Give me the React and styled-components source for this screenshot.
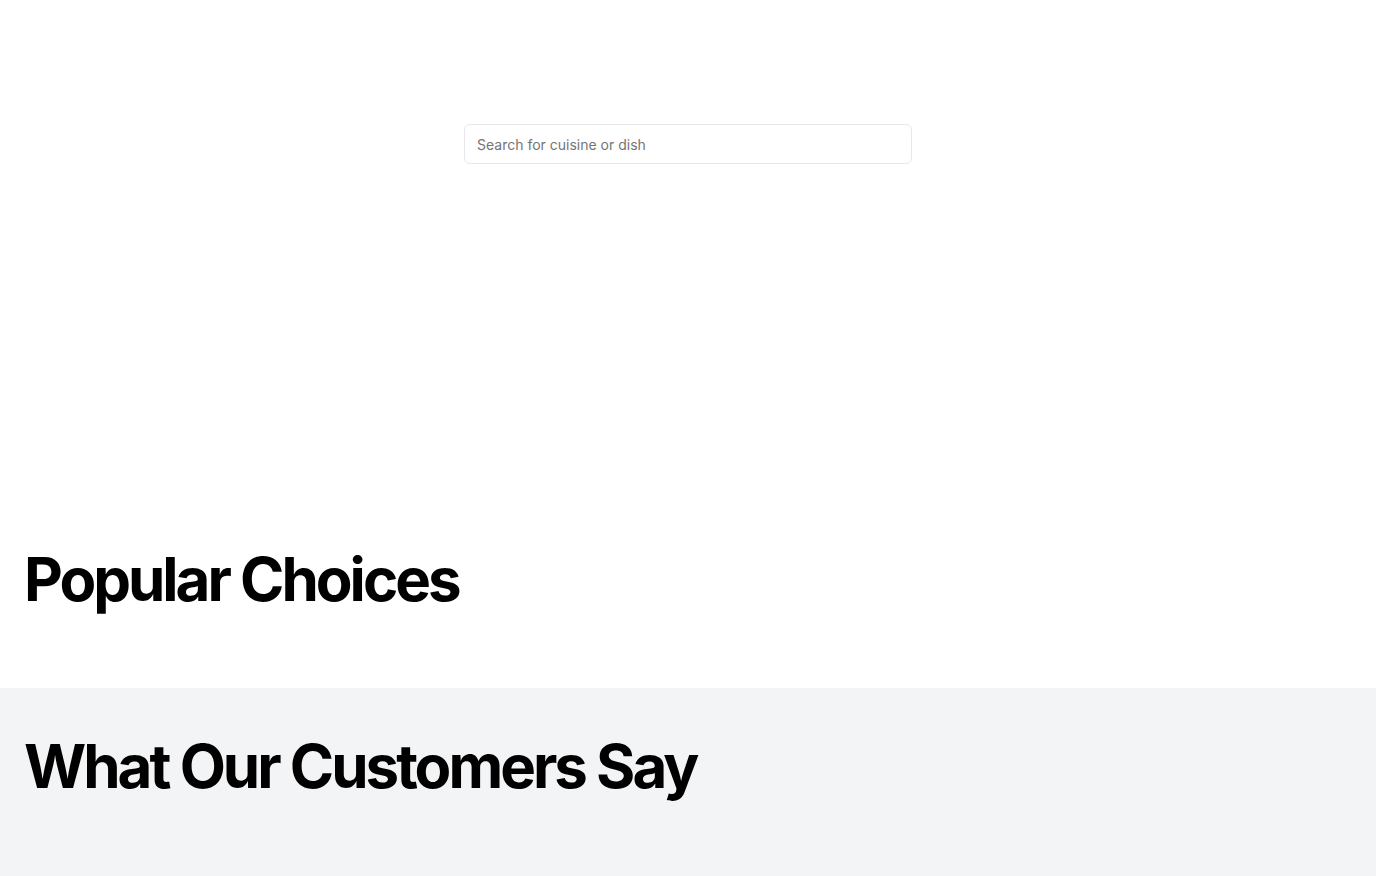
import React from 'react';
import styled, { createGlobalStyle } from 'styled-components';

const Global = createGlobalStyle`
  body {
    margin: 0;
    font-family: Inter, "Noto Sans", sans-serif;
    background: #fff;
    color: #000;
  }
`;

export default function App() {
  return (
    <>
      <Global />
      <Hero>
        <SearchInput type="text" placeholder="Search for cuisine or dish" />
      </Hero>
      <Section>
        <Heading>Popular Choices</Heading>
      </Section>
      <Section $muted>
        <Heading>What Our Customers Say</Heading>
      </Section>
    </>
  );
}

const Hero = styled.header`
  height: 501px;
  box-sizing: border-box;
  padding-top: 124px;
  display: flex;
  justify-content: center;
  align-items: flex-start;
`;

const SearchInput = styled.input`
  width: 448px;
  height: 40px;
  box-sizing: border-box;
  padding: 0 12px;
  border: 1px solid #e5e7eb;
  border-radius: 6px;
  font-family: Inter, sans-serif;
  font-size: 14px;
  color: #111827;
  outline: none;
  &::placeholder {
    color: #757575;
  }
`;

const Section = styled.section`
  padding: 48px 24px ${p => (p.$muted ? '80px' : '79px')};
  background: ${p => (p.$muted ? '#f3f4f6' : '#fff')};
  min-height: ${p => (p.$muted ? '188px' : '0')};
  box-sizing: border-box;
`;

const Heading = styled.h2`
  margin: 0;
  font-family: Inter, sans-serif;
  font-size: 60px;
  line-height: 1;
  font-weight: 700;
  letter-spacing: -0.05em;
`;
